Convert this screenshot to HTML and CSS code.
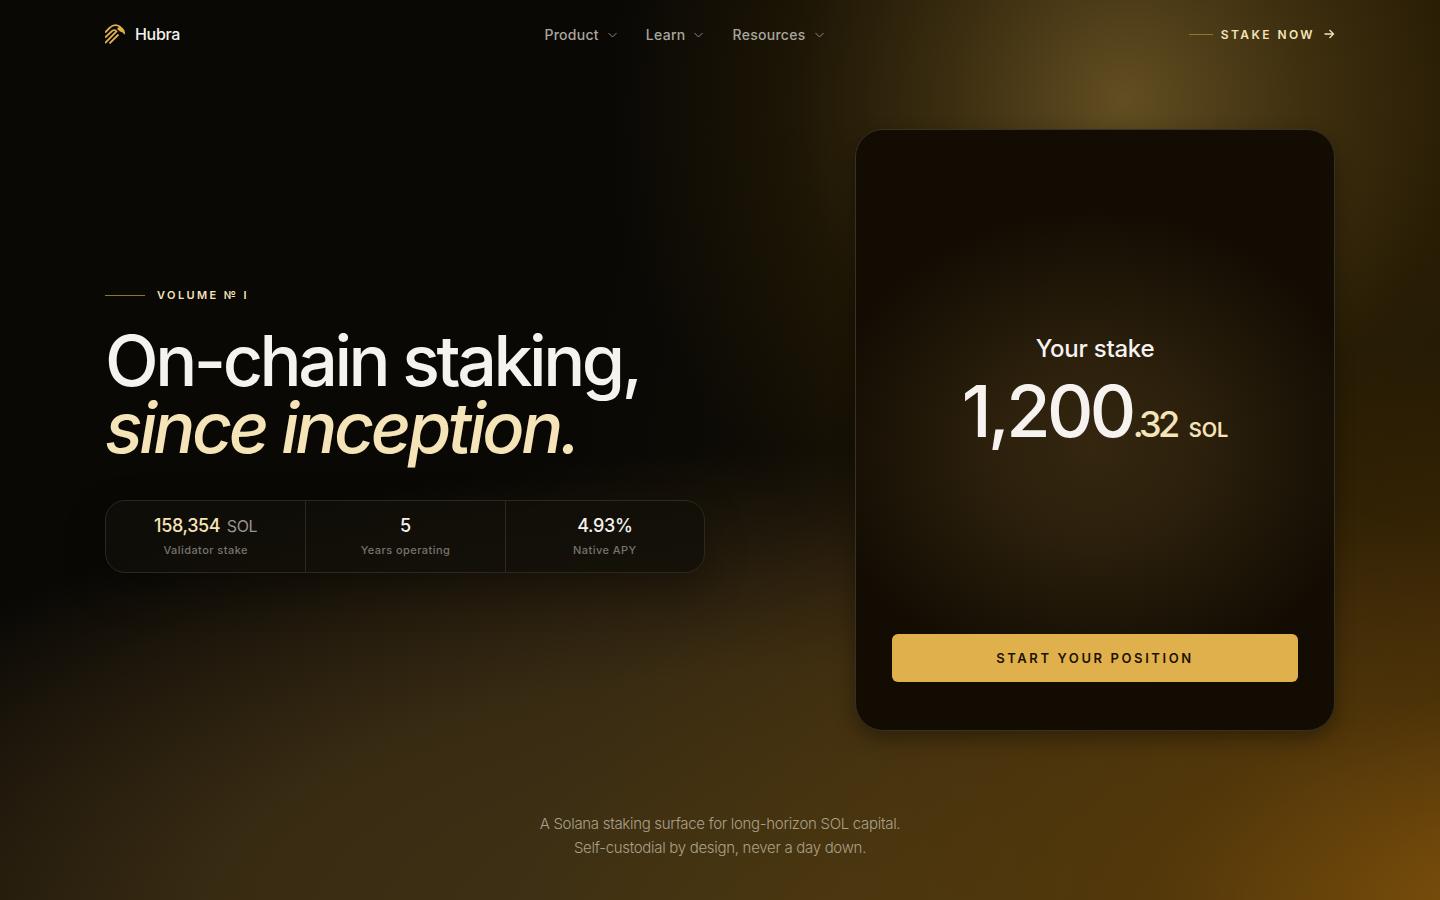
FILE: index.html
```html
<!DOCTYPE html>
<html lang="en">
<head>
    <meta charset="UTF-8">
    <meta name="viewport" content="width=device-width, initial-scale=1.0">
    <title>Hubra</title>
    <link rel="stylesheet" href="styles.css">
</head>
<body>
    <header class="header">
        <a class="brand" href="#">
            <svg class="logo" viewBox="0 0 20 20" fill="none" stroke="currentColor" stroke-width="1.8">
                <path d="M0 8.500L5 3.500C8 0.300 13 0.300 16 3.500"/>
                <path d="M14 2.500C18 3 20 6 20 10L19 10.500C18.500 8.500 17 8 15 7.500L12 5Z" fill="currentColor" stroke="none"/>
                <path d="M0 13.500L6.500 7.500C8.500 5.500 10.500 6 11.500 7.500L0 19"/>
                <path d="M4.500 19.500L13.500 10.500"/>
            </svg>
            Hubra
        </a>
        <nav class="nav">
            <button class="nav-item" type="button">Product
                <svg class="chevron" viewBox="0 0 11 11"><path d="M1.500 4L5.500 8L9.500 4"/></svg>
            </button>
            <button class="nav-item" type="button">Learn
                <svg class="chevron" viewBox="0 0 11 11"><path d="M1.500 4L5.500 8L9.500 4"/></svg>
            </button>
            <button class="nav-item" type="button">Resources
                <svg class="chevron" viewBox="0 0 11 11"><path d="M1.500 4L5.500 8L9.500 4"/></svg>
            </button>
        </nav>
        <a class="stake-link" href="#">
            <span class="stake-line"></span>
            Stake now
            <svg class="arrow" viewBox="0 0 12 12"><path d="M1.500 6H10.500M6.500 2L10.500 6L6.500 10"/></svg>
        </a>
    </header>

    <main class="hero">
        <section class="intro">
            <p class="eyebrow">Volume № I</p>
            <h1 class="title">On-chain staking,<br><em>since inception.</em></h1>
            <dl class="stats">
                <div class="stat">
                    <dd class="stat-value gold">158,354 <span class="unit">SOL</span></dd>
                    <dt class="stat-label">Validator stake</dt>
                </div>
                <div class="stat">
                    <dd class="stat-value">5</dd>
                    <dt class="stat-label">Years operating</dt>
                </div>
                <div class="stat">
                    <dd class="stat-value">4.93%</dd>
                    <dt class="stat-label">Native APY</dt>
                </div>
            </dl>
        </section>
        <section class="card">
            <div class="position">
                <h2 class="card-title">Your stake</h2>
                <p class="amount">1,200<span class="decimals">.32</span><span class="currency">SOL</span></p>
            </div>
            <button class="start" type="button">Start your position</button>
        </section>
    </main>

    <footer class="footer">
        <p>A Solana staking surface for long-horizon SOL capital.<br>Self-custodial by design, never a day down.</p>
    </footer>
</body>
</html>
```
FILE: styles.css
```css
* {
    box-sizing: border-box;
}
body {
    margin: 0;
    min-height: 100vh;
    display: flex;
    flex-direction: column;
    font-family: Inter, "Liberation Sans", sans-serif;
    color: #f5f2ef;
    background-color: #090805;
    background-image:
        radial-gradient(ellipse 36% 58% at 78% 11%, rgba(140, 112, 50, 0.64) 0%, rgba(104, 80, 28, 0.46) 35%, rgba(62, 44, 5, 0.3) 65%, rgba(50, 34, 2, 0) 100%),
        radial-gradient(ellipse 72% 64% at 108% 102%, rgba(140, 88, 10, 0.9) 0%, rgba(95, 60, 4, 0.6) 40%, rgba(60, 38, 2, 0) 100%),
        radial-gradient(ellipse 78% 54% at 57% 104%, rgba(70, 56, 22, 0.92) 0%, rgba(64, 49, 21, 0.85) 55%, rgba(54, 40, 18, 0.65) 74%, rgba(30, 22, 8, 0) 100%),
        linear-gradient(100deg, rgba(40, 28, 4, 0) 40%, rgba(46, 32, 4, 0.7) 100%);
}
p, h1, h2, dl, dd {
    margin: 0;
}
a {
    color: inherit;
    text-decoration: none;
}
button {
    font: inherit;
    border: none;
    background: none;
    cursor: pointer;
}
.header {
    width: 100%;
    max-width: 1280px;
    height: 68px;
    margin: 0 auto;
    padding: 0 25px;
    display: flex;
    justify-content: space-between;
    align-items: center;
}
.brand {
    display: flex;
    align-items: center;
    gap: 10px;
    font-size: 16px;
    font-weight: 500;
    letter-spacing: -0.02em;
}
.logo {
    width: 20px;
    height: 20px;
    color: #dfb04b;
}
.nav {
    display: flex;
    gap: 28px;
}
.nav-item {
    display: flex;
    align-items: center;
    gap: 8px;
    padding: 0;
    font-size: 14px;
    font-weight: 500;
    letter-spacing: 0.02em;
    color: #aaa69e;
}
.chevron, .arrow {
    width: 11px;
    height: 11px;
    fill: none;
    stroke: currentColor;
}
.chevron {
    opacity: 0.8;
}
.arrow {
    width: 12px;
    height: 12px;
    stroke-width: 1.3;
}
.stake-link {
    display: flex;
    align-items: center;
    gap: 8px;
    font-size: 12px;
    font-weight: 600;
    letter-spacing: 0.2em;
    text-transform: uppercase;
    color: #f5e4b8;
}
.stake-line {
    width: 24px;
    height: 1px;
    background-color: #8f7434;
}
.hero {
    width: 100%;
    max-width: 1280px;
    margin: 0 auto;
    padding: 61px 25px 0;
    display: grid;
    grid-template-columns: minmax(0, 600px) minmax(0, 480px);
    justify-content: space-between;
    align-items: center;
}
.eyebrow {
    display: flex;
    align-items: center;
    gap: 12px;
    font-size: 11px;
    line-height: 16px;
    font-weight: 600;
    letter-spacing: 0.22em;
    text-transform: uppercase;
    color: #f5e4b8;
}
.eyebrow::before {
    content: "";
    width: 40px;
    height: 1px;
    background-color: #8f7434;
}
.title {
    margin: 24px 0 39px;
    font-size: 70px;
    line-height: 67px;
    font-weight: 500;
    letter-spacing: -0.05em;
    white-space: nowrap;
}
.title em {
    color: #f5e4b8;
}
.stats {
    display: grid;
    grid-template-columns: repeat(3, 1fr);
    border: 1px solid #2b2820;
    border-radius: 20px;
    background-color: rgba(18, 15, 9, 0.8);
    box-shadow: 0 16px 40px rgba(0, 0, 0, 0.3);
}
.stat {
    padding: 14px 8px;
    text-align: center;
}
.stat + .stat {
    border-left: 1px solid #2b2820;
}
.stat-value {
    font-size: 18px;
    line-height: 22px;
    font-weight: 500;
    letter-spacing: -0.02em;
}
.gold {
    color: #f5e4b8;
}
.unit {
    margin-left: 2px;
    font-size: 16px;
    font-weight: 400;
    color: #99958d;
}
.stat-label {
    margin-top: 6px;
    font-size: 11px;
    line-height: 15px;
    font-weight: 500;
    letter-spacing: 0.04em;
    color: #77736b;
}
.card {
    min-height: 602px;
    padding: 36px 36px 48px;
    display: flex;
    flex-direction: column;
    border: 1px solid #393222;
    border-radius: 28px;
    background-color: #130c03;
    background-image: radial-gradient(ellipse 58% 40% at 50% 53%, #34260f 0%, #2d210d 35%, #1c1406 75%, #130c03 100%);
    box-shadow: 0 8px 20px rgba(0, 0, 0, 0.35);
}
.position {
    flex: 1;
    padding-top: 8px;
    display: flex;
    flex-direction: column;
    align-items: center;
    justify-content: center;
}
.card-title {
    font-size: 24px;
    line-height: 32px;
    font-weight: 500;
    letter-spacing: -0.01em;
}
.amount {
    font-size: 72px;
    line-height: 92px;
    font-weight: 500;
    letter-spacing: -0.05em;
    white-space: nowrap;
}
.decimals {
    font-size: 36px;
    color: #f5e4b8;
}
.currency {
    margin-left: 12px;
    font-size: 20px;
    font-weight: 600;
    letter-spacing: 0;
    color: #f5e4b8;
}
.start {
    height: 48px;
    border-radius: 6px;
    font-size: 13px;
    font-weight: 600;
    letter-spacing: 0.2em;
    text-transform: uppercase;
    color: #1c1305;
    background-color: #dfb04b;
}
.footer {
    margin-top: auto;
    padding: 80px 24px 40px;
    text-align: center;
    font-size: 15px;
    line-height: 24px;
    font-weight: 300;
    letter-spacing: -0.02em;
    color: #aaa08a;
}
```
